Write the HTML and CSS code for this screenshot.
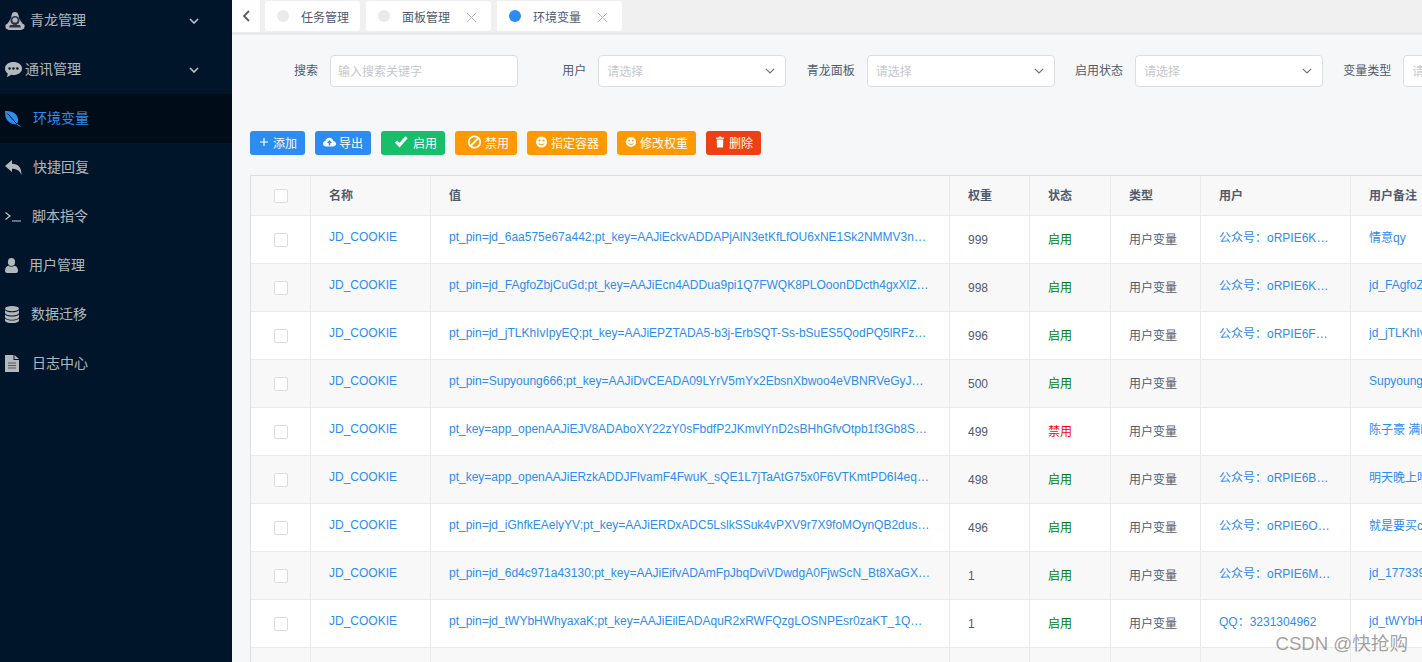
FILE: index.html
```html
<!DOCTYPE html>
<html lang="zh-CN">
  <head>
    <meta charset="UTF-8" />
    <title>环境变量</title>
    <link rel="stylesheet" href="styles.css">
  </head>
  <body>
    <aside class="sidebar">
      <ul class="menu">
        <li class="menu-item">
          <span class="menu-icon box-ql">
            <svg width="20" height="18" viewBox="0 0 20 18"><path fill="#b4b8bd" d="M10 0c2 0 3 1 3.400 3l1 4 3 4.500 2.300 1.500-.5 3.500-3 1.500H3.800l-3-1.500L.3 13l2.300-1.500 3-4.500 1-4C7 1 8 0 10 0z"/><circle cx="10" cy="8.500" r="4.500" fill="#2b3442"/><circle cx="10" cy="8" r="2.600" fill="#b4b8bd"/><path fill="#2b3442" d="M5 13h10l1 2.500H4z"/></svg>
          </span>
          <span class="menu-label">青龙管理</span>
          <svg class="chevron" width="10" height="6" viewBox="0 0 10 6"><path d="M1 1l4 4 4-4" fill="none" stroke="#b9c1ca" stroke-width="1.600"/></svg>
        </li>
        <li class="menu-item">
          <span class="menu-icon box-chat">
            <svg width="17" height="15" viewBox="0 0 17 15"><path fill="#b4b8bd" d="M8.500 0C13 0 17 2.600 17 6.500S13 13 8.500 13c-.9 0-1.800-.1-2.600-.3C4.500 14 2.800 14.800 1.500 15c.8-1 1.300-2.200 1.200-3.600C1 10.200 0 8.500 0 6.500 0 2.600 4 0 8.500 0z"/><circle cx="4.600" cy="6.500" r="1.200" fill="#001529"/><circle cx="8.500" cy="6.500" r="1.200" fill="#001529"/><circle cx="12.400" cy="6.500" r="1.200" fill="#001529"/></svg>
          </span>
          <span class="menu-label">通讯管理</span>
          <svg class="chevron" width="10" height="6" viewBox="0 0 10 6"><path d="M1 1l4 4 4-4" fill="none" stroke="#b9c1ca" stroke-width="1.600"/></svg>
        </li>
        <li class="menu-item active">
          <span class="menu-icon box-leaf">
            <svg width="16" height="16" viewBox="0 0 16 16"><path fill="#2d8cf0" d="M0 0c6 0 12 1.500 13 8 .3 2.300-.3 4.300-1.400 5.500C7 14 .8 10 .4 4.500.3 3 .1 1.500 0 0z"/><path d="M2.500 2.500L12 13.200" fill="none" stroke="#000c17" stroke-width="1"/><path d="M12 13.200l3.500 2.500" fill="none" stroke="#2d8cf0" stroke-width="1"/></svg>
          </span>
          <span class="menu-label">环境变量</span>
        </li>
        <li class="menu-item">
          <span class="menu-icon box-reply">
            <svg width="17" height="15" viewBox="0 0 17 15"><path fill="#b4b8bd" d="M0 6l7-6v3.800c6 0 9.500 3.500 9.500 11.200-1.400-4-4-6.300-9.500-6.300V12z"/></svg>
          </span>
          <span class="menu-label">快捷回复</span>
        </li>
        <li class="menu-item">
          <span class="menu-icon box-term">
            <svg width="16" height="10" viewBox="0 0 16 10"><path d="M.5.500L5 4 .5 7.500M7 9h9" fill="none" stroke="#c4c8cc" stroke-width="1.200"/></svg>
          </span>
          <span class="menu-label">脚本指令</span>
        </li>
        <li class="menu-item">
          <span class="menu-icon box-user">
            <svg width="13" height="15" viewBox="0 0 13 15"><ellipse cx="6.500" cy="4" rx="3.600" ry="4" fill="#b4b8bd"/><path fill="#b4b8bd" d="M0 13c0-3.500 1.500-5 3.500-5.300 1.800 1.300 4.200 1.300 6 0C11.500 8 13 9.500 13 13c0 1.300-1 2-2 2H2c-1 0-2-.7-2-2z"/></svg>
          </span>
          <span class="menu-label">用户管理</span>
        </li>
        <li class="menu-item">
          <span class="menu-icon box-db">
            <svg width="14" height="17" viewBox="0 0 14 17"><ellipse cx="7" cy="2.600" rx="7" ry="2.600" fill="#b4b8bd"/><path fill="#b4b8bd" d="M0 4.200c1.500 1.500 4 2 7 2s5.500-.5 7-2v2.600c0 1.500-3 2.700-7 2.700S0 8.300 0 6.800zM0 8.500c1.500 1.500 4 2 7 2s5.500-.5 7-2v2.600c0 1.500-3 2.700-7 2.700s-7-1.200-7-2.700zM0 12.500c1.500 1.500 4 2 7 2s5.500-.5 7-2v1.900c0 1.500-3 2.600-7 2.600s-7-1.100-7-2.600z"/></svg>
          </span>
          <span class="menu-label">数据迁移</span>
        </li>
        <li class="menu-item">
          <span class="menu-icon box-doc">
            <svg width="14" height="17" viewBox="0 0 14 17"><path fill="#b4b8bd" d="M0 0h8.500v5H14v12H0z"/><path fill="#b4b8bd" d="M9.500 0L14 4H9.500z"/><path d="M3 8h8M3 10.500h8M3 13h8" stroke="#4b5563" stroke-width="1"/></svg>
          </span>
          <span class="menu-label">日志中心</span>
        </li>
      </ul>
    </aside>

    <main class="content">
      <div class="tabbar">
        <div class="back">
          <svg width="8" height="12" viewBox="0 0 8 12"><path d="M7 1L2 6l5 5" fill="none" stroke="#515a6e" stroke-width="1.800"/></svg>
        </div>
        <div class="tab tab-first"><i class="dot"></i><span>任务管理</span></div>
        <div class="tab"><i class="dot"></i><span>面板管理</span><b class="close"></b></div>
        <div class="tab"><i class="dot dot-on"></i><span>环境变量</span><b class="close"></b></div>
      </div>

      <form class="filters">
        <div class="field"><label>搜索</label><div class="input placeholder">输入搜索关键字</div></div>
        <div class="field"><label>用户</label><div class="input placeholder select">请选择<svg width="10" height="6" viewBox="0 0 10 6"><path d="M.8.800L5 5 9.200.800" fill="none" stroke="#6d7380" stroke-width="1.200"/></svg></div></div>
        <div class="field"><label>青龙面板</label><div class="input placeholder select">请选择<svg width="10" height="6" viewBox="0 0 10 6"><path d="M.8.800L5 5 9.200.800" fill="none" stroke="#6d7380" stroke-width="1.200"/></svg></div></div>
        <div class="field"><label>启用状态</label><div class="input placeholder select">请选择<svg width="10" height="6" viewBox="0 0 10 6"><path d="M.8.800L5 5 9.200.800" fill="none" stroke="#6d7380" stroke-width="1.200"/></svg></div></div>
        <div class="field"><label>变量类型</label><div class="input placeholder select">请选择<svg width="10" height="6" viewBox="0 0 10 6"><path d="M.8.800L5 5 9.200.800" fill="none" stroke="#6d7380" stroke-width="1.200"/></svg></div></div>
      </form>

      <div class="toolbar">
        <button class="btn btn-blue"><svg width="12" height="12" viewBox="0 0 12 12"><path d="M6 2v8M2 6h8" stroke="#fff" stroke-width="1.200"/></svg>添加</button>
        <button class="btn btn-blue"><svg width="13" height="12" viewBox="0 0 13 12"><path fill="#fff" d="M3 10.500C1.300 10.500 0 9.300 0 7.700c0-1.400 1-2.500 2.300-2.700C2.700 3 4.400 1.700 6.300 1.700c2 0 3.600 1.300 4 3.200 1.500.2 2.700 1.300 2.700 2.800 0 1.600-1.300 2.800-3 2.800z"/><path fill="#2d8cf0" d="M6.500 4L9 7H7.300v2.500H5.700V7H4z"/></svg>导出</button>
        <button class="btn btn-green"><svg width="21" height="12" viewBox="0 0 21 12"><path d="M7 5.500l3.500 3.700 7-8" fill="none" stroke="#fff" stroke-width="3.200"/></svg>启用</button>
        <button class="btn btn-orange"><svg class="icon-ban" width="19" height="14" viewBox="0 0 19 14"><circle cx="11.500" cy="7" r="5.700" fill="none" stroke="#fff" stroke-width="1.800"/><path d="M7.600 11L15.400 3" stroke="#fff" stroke-width="1.800"/></svg>禁用</button>
        <button class="btn btn-orange"><svg width="13" height="12" viewBox="0 0 13 12"><circle cx="6.500" cy="6" r="5.500" fill="#fff"/><circle cx="4.500" cy="4.500" r="1" fill="#f90"/><circle cx="8.500" cy="4.500" r="1" fill="#f90"/><path d="M3.700 7.500c1.500 1.500 4.100 1.500 5.600 0" fill="none" stroke="#f90"/></svg>指定容器</button>
        <button class="btn btn-orange"><svg width="12" height="12" viewBox="0 0 13 12"><circle cx="6.500" cy="6" r="5.500" fill="#fff"/><circle cx="4.500" cy="4.500" r="1" fill="#f90"/><circle cx="8.500" cy="4.500" r="1" fill="#f90"/><path d="M3.700 7.500c1.500 1.500 4.100 1.500 5.600 0" fill="none" stroke="#f90"/></svg>修改权重</button>
        <button class="btn btn-red"><svg width="12" height="12" viewBox="0 0 12 12"><path fill="#fff" d="M2 1.500h2.500L5 .5h2l.5 1H10v1.300H2zM2.700 3.500h6.600L9 11.500H3z"/></svg>删除</button>
      </div>

      <div class="table-wrap">
        <table class="table">
          <colgroup>
            <col class="c-check"><col class="c-name"><col class="c-value"><col class="c-weight"><col class="c-status"><col class="c-type"><col class="c-user"><col class="c-remark">
          </colgroup>
          <thead>
            <tr>
              <th class="check"><i class="checkbox"></i></th>
              <th>名称</th><th>值</th><th>权重</th><th>状态</th><th>类型</th><th>用户</th><th>用户备注</th>
            </tr>
          </thead>
          <tbody>
            <tr>
              <td class="check"><i class="checkbox"></i></td>
              <td><a>JD_COOKIE</a></td>
              <td><a>pt_pin=jd_6aa575e67a442;pt_key=AAJiEckvADDAPjAlN3etKfLfOU6xNE1Sk2NMMV3n8xQaLpT5vZ</a></td>
              <td class="num">999</td><td class="on">启用</td><td>用户变量</td>
              <td><a>公众号：oRPIE6K6rTq2mXwLs9</a></td><td><a>情意qy</a></td>
            </tr>
            <tr>
              <td class="check"><i class="checkbox"></i></td>
              <td><a>JD_COOKIE</a></td>
              <td><a>pt_pin=jd_FAgfoZbjCuGd;pt_key=AAJiEcn4ADDua9pi1Q7FWQK8PLOoonDDcth4gxXlZw8RtNc2vK</a></td>
              <td class="num">998</td><td class="on">启用</td><td>用户变量</td>
              <td><a>公众号：oRPIE6K6rTq2mXwLs9</a></td><td><a>jd_FAgfoZbjCuGd</a></td>
            </tr>
            <tr>
              <td class="check"><i class="checkbox"></i></td>
              <td><a>JD_COOKIE</a></td>
              <td><a>pt_pin=jd_jTLKhIvIpyEQ;pt_key=AAJiEPZTADA5-b3j-ErbSQT-Ss-bSuES5QodPQ5lRFzw8RtNc2vK</a></td>
              <td class="num">996</td><td class="on">启用</td><td>用户变量</td>
              <td><a>公众号：oRPIE6F6rTq2mXwLs9</a></td><td><a>jd_jTLKhIvIpyEQ</a></td>
            </tr>
            <tr>
              <td class="check"><i class="checkbox"></i></td>
              <td><a>JD_COOKIE</a></td>
              <td><a>pt_pin=Supyoung666;pt_key=AAJiDvCEADA09LYrV5mYx2EbsnXbwoo4eVBNRVeGyJw8RtNc2vK</a></td>
              <td class="num">500</td><td class="on">启用</td><td>用户变量</td>
              <td></td><td><a>Supyoung666</a></td>
            </tr>
            <tr>
              <td class="check"><i class="checkbox"></i></td>
              <td><a>JD_COOKIE</a></td>
              <td><a>pt_key=app_openAAJiEJV8ADAboXY22zY0sFbdfP2JKmvlYnD2sBHhGfvOtpb1f3Gb8Sw8RtNc2vK</a></td>
              <td class="num">499</td><td class="off">禁用</td><td>用户变量</td>
              <td></td><td><a>陈子豪 满时间</a></td>
            </tr>
            <tr>
              <td class="check"><i class="checkbox"></i></td>
              <td><a>JD_COOKIE</a></td>
              <td><a>pt_key=app_openAAJiERzkADDJFIvamF4FwuK_sQE1L7jTaAtG75x0F6VTKmtPD6I4eqw8RtNc2vK</a></td>
              <td class="num">498</td><td class="on">启用</td><td>用户变量</td>
              <td><a>公众号：oRPIE6B6rTq2mXwLs9</a></td><td><a>明天晚上吃什么</a></td>
            </tr>
            <tr>
              <td class="check"><i class="checkbox"></i></td>
              <td><a>JD_COOKIE</a></td>
              <td><a>pt_pin=jd_iGhfkEAelyYV;pt_key=AAJiERDxADC5LslkSSuk4vPXV9r7X9foMOynQB2dusw8RtNc2vK</a></td>
              <td class="num">496</td><td class="on">启用</td><td>用户变量</td>
              <td><a>公众号：oRPIE6O6rTq2mXwLs9</a></td><td><a>就是要买cc</a></td>
            </tr>
            <tr>
              <td class="check"><i class="checkbox"></i></td>
              <td><a>JD_COOKIE</a></td>
              <td><a>pt_pin=jd_6d4c971a43130;pt_key=AAJiEifvADAmFpJbqDviVDwdgA0FjwScN_Bt8XaGXw8RtNc2vK</a></td>
              <td class="num">1</td><td class="on">启用</td><td>用户变量</td>
              <td><a>公众号：oRPIE6M6rTq2mXwLs9</a></td><td><a>jd_177339</a></td>
            </tr>
            <tr>
              <td class="check"><i class="checkbox"></i></td>
              <td><a>JD_COOKIE</a></td>
              <td><a>pt_pin=jd_tWYbHWhyaxaK;pt_key=AAJiEilEADAquR2xRWFQzgLOSNPEsr0zaKT_1QW8RtNc2vK</a></td>
              <td class="num">1</td><td class="on">启用</td><td>用户变量</td>
              <td><a>QQ：3231304962</a></td><td><a>jd_tWYbHWhyaxaK</a></td>
            </tr>
            <tr>
              <td class="check"></td><td></td><td></td><td></td><td></td><td></td><td></td><td></td>
            </tr>
          </tbody>
        </table>
      </div>
    </main>

    <div class="watermark">CSDN @快抢购</div>
  </body>
</html>
```
FILE: styles.css
```css
html,
body {
  height: 100%;
}

body {
  margin: 0;
  display: flex;
  overflow: hidden;
  font-family: "Liberation Sans", "Noto Sans CJK SC", sans-serif;
  font-size: 12px;
  color: #515a6e;
  background-color: #f5f7f9;
}

/* sidebar */
.sidebar {
  width: 232px;
  flex-shrink: 0;
  background-color: #001529;
  overflow: hidden;
}

.menu {
  list-style: none;
  margin: -4px 0 0;
  padding: 0;
}

.menu-item {
  height: 49px;
  padding-left: 5px;
  display: flex;
  align-items: center;
  font-size: 14px;
  color: rgba(255, 255, 255, 0.7);
}

.menu-item.active {
  background-color: #000c17;
  color: #2d8cf0;
}

.menu-label {
  margin-bottom: 4px;
}

.menu-icon {
  display: flex;
  align-items: center;
}

.box-ql { width: 25px; }
.box-chat { width: 20px; }
.box-leaf { width: 28px; }
.box-reply { width: 28px; }
.box-term { width: 27px; }
.box-user { width: 24px; }
.box-db { width: 26px; }
.box-doc { width: 27px; }

.chevron {
  margin-left: auto;
  margin-right: 33px;
}

/* right side */
.content {
  flex: 1;
  min-width: 0;
  overflow: hidden;
}

.tabbar {
  height: 32px;
  display: flex;
  background-color: #f0f0f0;
  border-bottom: 3px solid #e8eaec;
}

.back {
  width: 28px;
  display: flex;
  align-items: center;
  justify-content: center;
  background-color: #fff;
  margin-right: 5px;
}

.tab {
  height: 30px;
  margin-top: 1px;
  margin-right: 6px;
  width: 125px;
  display: flex;
  align-items: center;
  padding-left: 12px;
  box-sizing: border-box;
  background-color: #fff;
  border-radius: 3px;
  position: relative;
}

.tab-first {
  width: 95px;
}

.dot {
  width: 12px;
  height: 12px;
  margin-right: 12px;
  border-radius: 50%;
  background-color: #e8eaec;
}

.dot-on {
  background-color: #2d8cf0;
}

.close {
  position: absolute;
  right: 15px;
  top: 12px;
  width: 9px;
  height: 9px;
  background:
    linear-gradient(45deg, transparent 46%, #b5b8bf 46%, #b5b8bf 54%, transparent 54%),
    linear-gradient(-45deg, transparent 46%, #b5b8bf 46%, #b5b8bf 54%, transparent 54%);
}

.filters {
  display: flex;
  margin-top: 20px;
  padding-left: 18px;
  width: 1400px;
}

.field {
  flex: 0 0 268.33px;
  display: flex;
  align-items: flex-start;
}

.field label {
  width: 68px;
  flex-shrink: 0;
  padding-right: 12px;
  line-height: 32px;
  text-align: right;
}

.input {
  width: 188px;
  height: 32px;
  box-sizing: border-box;
  padding-left: 7px;
  line-height: 32px;
  background-color: #fff;
  border: 1px solid #dcdee2;
  border-radius: 4px;
  position: relative;
}

.placeholder {
  color: #c5c8ce;
}

.select {
  padding-left: 8px;
}

.select svg {
  position: absolute;
  right: 10px;
  top: 12px;
}

.toolbar {
  display: flex;
  gap: 10px;
  margin-top: 44px;
  padding-left: 18px;
}

.btn {
  height: 24px;
  padding: 0 8px 2px;
  display: flex;
  align-items: center;
  gap: 3px;
  border: none;
  border-radius: 3px;
  font-family: inherit;
  font-size: 12px;
  color: #fff;
  cursor: pointer;
}

.btn-blue { background-color: #2d8cf0; }
.btn-green { background-color: #19be6b; }
.btn-orange { background-color: #ff9900; }
.btn-red { background-color: #ed4014; }

.table-wrap {
  margin: 20px 0 0 18px;
  width: 1300px;
  border-top: 1px solid #dcdee2;
  border-left: 1px solid #dcdee2;
}

.table {
  table-layout: fixed;
  width: 1300px;
  border-collapse: separate;
  border-spacing: 0;
}

.c-check { width: 60px; }
.c-name { width: 120px; }
.c-value { width: 519px; }
.c-weight { width: 80px; }
.c-status { width: 81px; }
.c-type { width: 90px; }
.c-user { width: 150px; }
.c-remark { width: 200px; }

.table th,
.table td {
  padding: 0 18px 2px;
  text-align: left;
  font-size: 12px;
  border-right: 1px solid #e8eaec;
  border-bottom: 1px solid #e8eaec;
  white-space: nowrap;
  overflow: hidden;
  text-overflow: ellipsis;
}

.table th {
  height: 37px;
  background-color: #f8f8f9;
  font-weight: bold;
}

.table td {
  height: 45px;
  background-color: #fff;
}

.table td.num {
  padding: 1px 18px 0;
}

.table tbody tr:nth-child(even) td {
  background-color: #f8f8f9;
}

.table td a {
  display: block;
  position: relative;
  top: -2px;
  overflow: hidden;
  text-overflow: ellipsis;
  color: #2d8cf0;
}

.table .check {
  padding: 0;
  height: 47px;
  text-align: center;
}

.table th.check {
  height: 39px;
}

.checkbox {
  display: inline-block;
  width: 12px;
  height: 12px;
  vertical-align: middle;
  background-color: #fff;
  border: 1px solid #dcdee2;
  border-radius: 2px;
}

.on { color: green; }
.off { color: red; }

.watermark {
  position: absolute;
  right: 14px;
  bottom: 7px;
  font-size: 18.6px;
  color: rgba(120, 120, 120, 0.7);
}
```
